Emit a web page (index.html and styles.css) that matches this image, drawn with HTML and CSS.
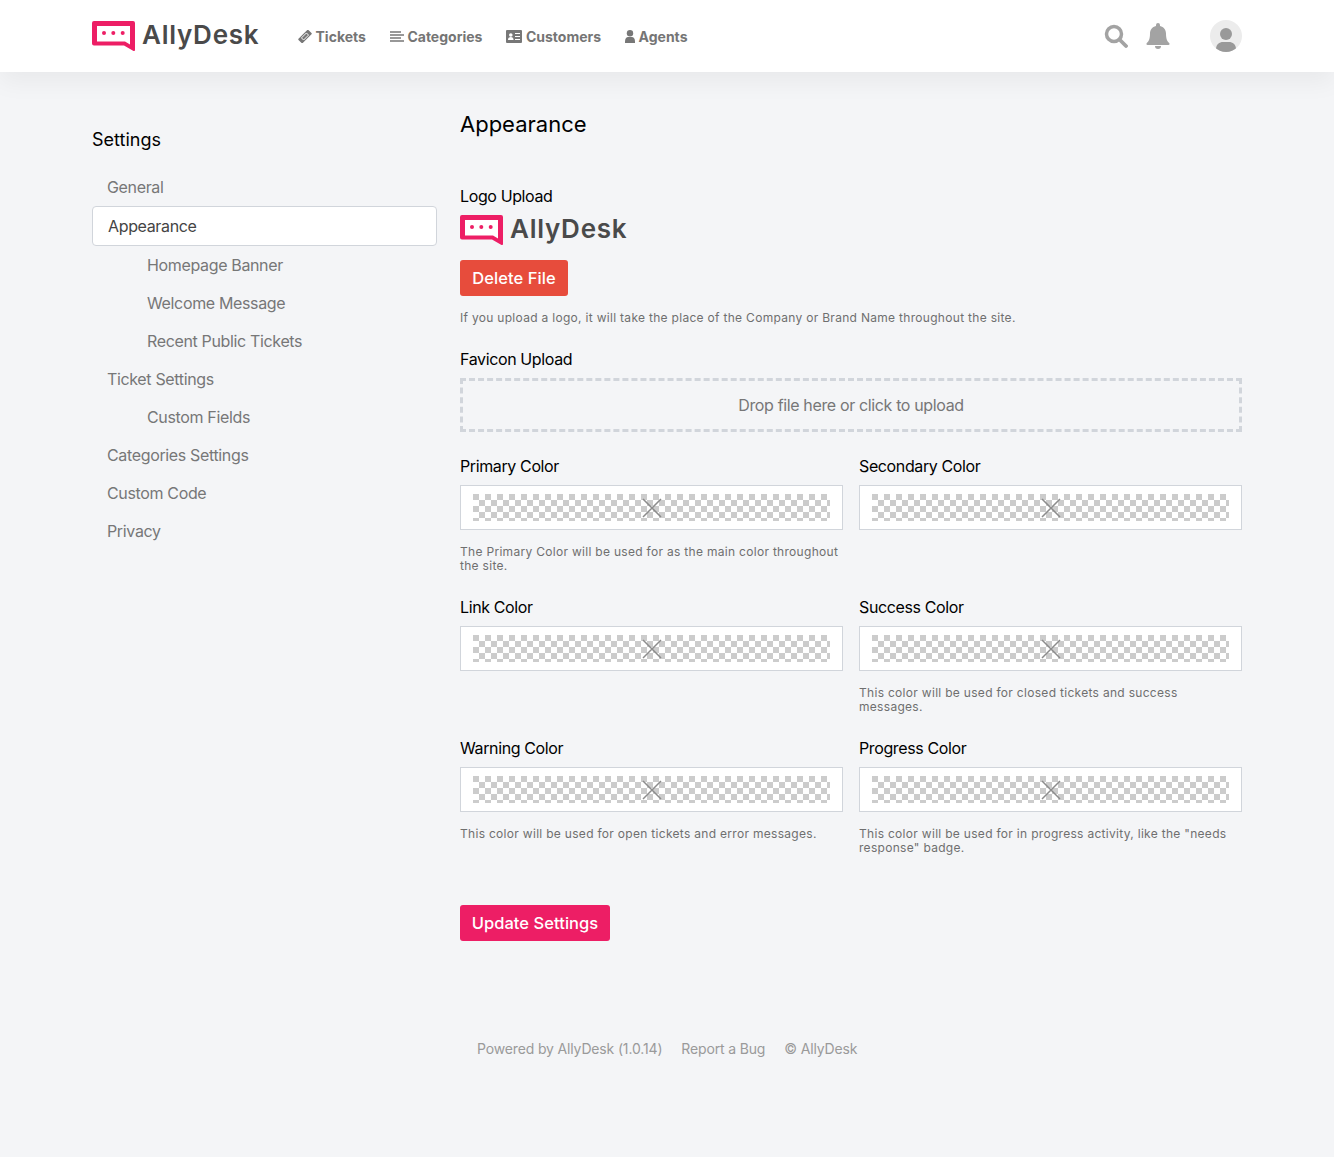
FILE: index.html

```html
<!DOCTYPE html>
<html lang="en">
<head>
    <meta charset="UTF-8">
    <meta name="viewport" content="width=device-width, initial-scale=1.0">
    <title>AllyDesk - Appearance</title>
    <link rel="stylesheet" href="styles.css">
</head>
<body>
<svg class="defs" width="0" height="0">
    <symbol id="bubble" viewBox="0 0 43 30">
        <path fill="#ed1e65" d="M2 0h39a2 2 0 0 1 2 2v27a1 1 0 0 1-1.500.9L32 24.500H2a2 2 0 0 1-2-2V2a2 2 0 0 1 2-2z"/>
        <path fill="#fff" d="M5 5h33v18.500L33 20.500H5z"/>
        <circle fill="#ed1e65" cx="12" cy="12" r="2"/>
        <circle fill="#ed1e65" cx="21.300" cy="12" r="2"/>
        <circle fill="#ed1e65" cx="30.700" cy="12" r="2"/>
    </symbol>
    <symbol id="cross" viewBox="0 0 20 20">
        <path d="M1 1l18 18M19 1L1 19" stroke="#8c8c8c" stroke-width="1.500" fill="none"/>
    </symbol>
</svg>

<header class="topbar">
    <a class="brand" href="#">
        <svg class="brand-mark"><use href="#bubble"/></svg>
        <span class="brand-name">AllyDesk</span>
    </a>
    <nav class="topnav">
        <a href="#">
            <svg width="14" height="13" viewBox="0 0 14 13"><g transform="rotate(-45 7 6.500)"><rect x="0" y="3.500" width="14" height="6" rx=".8" fill="#777"/><rect x="3.500" y="5" width="7" height="3" fill="none" stroke="#fff" stroke-width=".9"/></g></svg>
            Tickets
        </a>
        <a href="#">
            <svg width="14" height="11" viewBox="0 0 14 11"><path stroke="#777" stroke-width="1.300" d="M0 1h11M0 4h14M0 7h11M0 10h14"/></svg>
            Categories
        </a>
        <a href="#">
            <svg width="16" height="13" viewBox="0 0 16 13"><path fill="#777" d="M1 0h14a1 1 0 0 1 1 1v11a1 1 0 0 1-1 1H1a1 1 0 0 1-1-1V1a1 1 0 0 1 1-1z"/><circle cx="4.800" cy="5" r="1.800" fill="#fff"/><path fill="#fff" d="M2 10c0-2 1.200-3 2.800-3s2.800 1 2.800 3z"/><path stroke="#fff" stroke-width="1.200" d="M9 3.500h5M9 6.500h5M9 9.500h5"/></svg>
            Customers
        </a>
        <a href="#">
            <svg width="10" height="13" viewBox="0 0 10 13"><circle cx="5" cy="3.200" r="3.200" fill="#777"/><path fill="#777" d="M0 11.500C0 8.500 1.300 7 3.200 7h3.600C8.700 7 10 8.500 10 11.500V13H0z"/></svg>
            Agents
        </a>
    </nav>
    <div class="topbar-actions">
        <svg class="action-search" width="24" height="24" viewBox="0 0 24 24"><circle cx="10" cy="10" r="7.500" fill="none" stroke="#a3a3a3" stroke-width="3.500"/><path d="M15.500 15.500l6.500 6.500" stroke="#a3a3a3" stroke-width="3.800" stroke-linecap="round"/></svg>
        <svg class="action-bell" width="24" height="26" viewBox="0 0 24 26"><path fill="#a3a3a3" d="M12 0a2 2 0 0 1 2 2v1c3.800.8 6 3.800 6 7.500 0 5 1 7.500 3.200 9.500.8 1 .2 2-.8 2H1.600c-1 0-1.600-1-.8-2C3 18 4 15.500 4 10.500 4 6.800 6.200 3.800 10 3V2a2 2 0 0 1 2-2z"/><path fill="#a3a3a3" d="M9 23h6a3 3 0 0 1-6 0z"/></svg>
        <div class="avatar">
            <svg width="32" height="32" viewBox="0 0 32 32"><circle cx="16" cy="14" r="6" fill="#999"/><path fill="#999" d="M6 32v-3c0-4.500 3.500-7 7-7h6c3.500 0 7 2.500 7 7v3z"/></svg>
        </div>
    </div>
</header>

<div class="page">
    <aside class="sidebar">
        <h2>Settings</h2>
        <ul class="side-menu">
            <li><a href="#">General</a></li>
            <li class="active"><a href="#">Appearance</a></li>
            <li class="sub"><a href="#">Homepage Banner</a></li>
            <li class="sub"><a href="#">Welcome Message</a></li>
            <li class="sub"><a href="#">Recent Public Tickets</a></li>
            <li><a href="#">Ticket Settings</a></li>
            <li class="sub"><a href="#">Custom Fields</a></li>
            <li><a href="#">Categories Settings</a></li>
            <li><a href="#">Custom Code</a></li>
            <li><a href="#">Privacy</a></li>
        </ul>
    </aside>

    <main class="content">
        <h1>Appearance</h1>

        <form class="settings-form">
            <div class="field logo-field">
                <label>Logo Upload</label>
                <div class="logo-preview">
                    <svg class="brand-mark"><use href="#bubble"/></svg>
                    <span class="brand-name">AllyDesk</span>
                </div>
                <button type="button" class="btn btn-delete">Delete File</button>
                <p class="hint">If you upload a logo, it will take the place of the Company or Brand Name throughout the site.</p>
            </div>

            <div class="field favicon-field">
                <label>Favicon Upload</label>
                <div class="dropzone">Drop file here or click to upload</div>
            </div>

            <div class="color-grid">
                <div class="field">
                    <label>Primary Color</label>
                    <div class="color-input"><div class="checker"><svg class="cross"><use href="#cross"/></svg></div></div>
                    <p class="hint">The Primary Color will be used for as the main color throughout the site.</p>
                </div>
                <div class="field">
                    <label>Secondary Color</label>
                    <div class="color-input"><div class="checker"><svg class="cross"><use href="#cross"/></svg></div></div>
                </div>
                <div class="field">
                    <label>Link Color</label>
                    <div class="color-input"><div class="checker"><svg class="cross"><use href="#cross"/></svg></div></div>
                </div>
                <div class="field">
                    <label>Success Color</label>
                    <div class="color-input"><div class="checker"><svg class="cross"><use href="#cross"/></svg></div></div>
                    <p class="hint">This color will be used for closed tickets and success messages.</p>
                </div>
                <div class="field">
                    <label>Warning Color</label>
                    <div class="color-input"><div class="checker"><svg class="cross"><use href="#cross"/></svg></div></div>
                    <p class="hint">This color will be used for open tickets and error messages.</p>
                </div>
                <div class="field">
                    <label>Progress Color</label>
                    <div class="color-input"><div class="checker"><svg class="cross"><use href="#cross"/></svg></div></div>
                    <p class="hint">This color will be used for in progress activity, like the "needs response" badge.</p>
                </div>
            </div>

            <button type="button" class="btn btn-update">Update Settings</button>
        </form>

        <footer class="page-footer">
            <a href="#">Powered by AllyDesk (1.0.14)</a>
            <a href="#">Report a Bug</a>
            <a href="#">© AllyDesk</a>
        </footer>
    </main>
</div>
</body>
</html>
```

FILE: styles.css

```css
* {
    box-sizing: border-box;
}

body {
    margin: 0;
    min-height: 1157px;
    background-color: #f4f5f7;
    font-family: Inter, "Liberation Sans", sans-serif;
    color: #000;
}

a {
    color: inherit;
    text-decoration: none;
}

.defs {
    display: block;
    height: 0;
}

.topbar {
    display: flex;
    align-items: center;
    height: 72px;
    padding: 0 92px;
    background-color: #fff;
    box-shadow: 0 10px 25px rgba(0, 0, 0, 0.05);
}

.brand {
    display: flex;
    align-items: center;
    gap: 7px;
    width: 167px;
    flex: none;
}

.brand-mark {
    width: 43px;
    height: 30px;
    flex: none;
}

.brand-name {
    margin-top: -2px;
    font-size: 26px;
    font-weight: 600;
    letter-spacing: 0.75px;
    line-height: 30px;
    white-space: nowrap;
    color: #4a4a4a;
}

.topnav {
    display: flex;
    gap: 24px;
    margin-left: 39px;
    font-size: 14px;
    font-weight: 700;
    color: #757575;
}

.topnav a {
    display: flex;
    align-items: center;
    gap: 3.500px;
}

.topbar-actions {
    display: flex;
    align-items: center;
    margin-left: auto;
}

.action-search {
    margin-right: 18px;
}

.avatar {
    width: 32px;
    height: 32px;
    margin-left: 40px;
    border-radius: 50%;
    background-color: #ececec;
    overflow: hidden;
}

.avatar svg {
    display: block;
}

.page {
    display: flex;
    gap: 23px;
    padding: 0 92px;
}

.sidebar {
    width: 345px;
    flex: none;
    padding-top: 56px;
}

.sidebar h2 {
    margin: 0 0 16px;
    font-size: 18px;
    font-weight: 400;
    line-height: 24px;
}

.side-menu {
    margin: 0;
    padding: 0;
    list-style: none;
    font-size: 16px;
    letter-spacing: -0.35px;
    color: #777;
}

.side-menu a {
    display: block;
    padding: 0 15px;
    line-height: 38px;
}

.side-menu .sub a {
    padding-left: 55px;
}

.side-menu .active a {
    padding: 0 15px;
    background-color: #fff;
    border: 1px solid #d1d5db;
    border-radius: 4px;
    color: #444;
}

.content {
    flex: 1;
    min-width: 0;
    padding-top: 36px;
}

.content h1 {
    margin: 0 0 46px;
    font-size: 22px;
    font-weight: 400;
    line-height: 32px;
}

label {
    display: block;
    margin-bottom: 9px;
    font-size: 16px;
    letter-spacing: -0.38px;
    line-height: 20px;
}

.hint {
    margin: 15px 0 0;
    font-size: 12px;
    line-height: 14px;
    letter-spacing: 0.3px;
    color: #6f6f6f;
}

.logo-preview {
    display: flex;
    align-items: center;
    gap: 7px;
    height: 30px;
}

.btn {
    display: block;
    height: 36px;
    padding: 0;
    border: none;
    border-radius: 3px;
    font-family: inherit;
    font-size: 16.500px;
    font-weight: 500;
    letter-spacing: 0.05px;
    white-space: nowrap;
    color: #fff;
}

.btn-delete {
    width: 108px;
    margin-top: 15px;
    background-color: #e74c3c;
}

.favicon-field {
    margin-top: 24px;
}

.dropzone {
    height: 54px;
    border: 3px dashed #d1d5db;
    font-size: 16px;
    letter-spacing: -0.36px;
    line-height: 48px;
    text-align: center;
    color: #777;
}

.color-grid {
    display: grid;
    grid-template-columns: 1fr 1fr;
    column-gap: 16px;
    row-gap: 24px;
    margin-top: 24px;
}

.color-input {
    height: 45px;
    padding: 8px 12px;
    background-color: #fff;
    border: 1px solid #d1d5db;
}

.checker {
    display: flex;
    justify-content: center;
    align-items: center;
    height: 27px;
    background: #fff url("data:image/svg+xml,%3Csvg xmlns='http://www.w3.org/2000/svg' width='12' height='12' shape-rendering='crispEdges'%3E%3Cpath fill='%23ccc' d='M0 0h6v6H0zM6 6h6v6H6z'/%3E%3C/svg%3E") 0 0 / 12px 12px;
}

.cross {
    width: 20px;
    height: 20px;
}

.btn-update {
    width: 150px;
    margin-top: 50px;
    background-color: #ed1e65;
}

.page-footer {
    display: flex;
    gap: 19px;
    margin-top: 98px;
    padding-left: 17px;
    font-size: 14px;
    letter-spacing: -0.15px;
    line-height: 20px;
    color: #9a9a9a;
}
```
